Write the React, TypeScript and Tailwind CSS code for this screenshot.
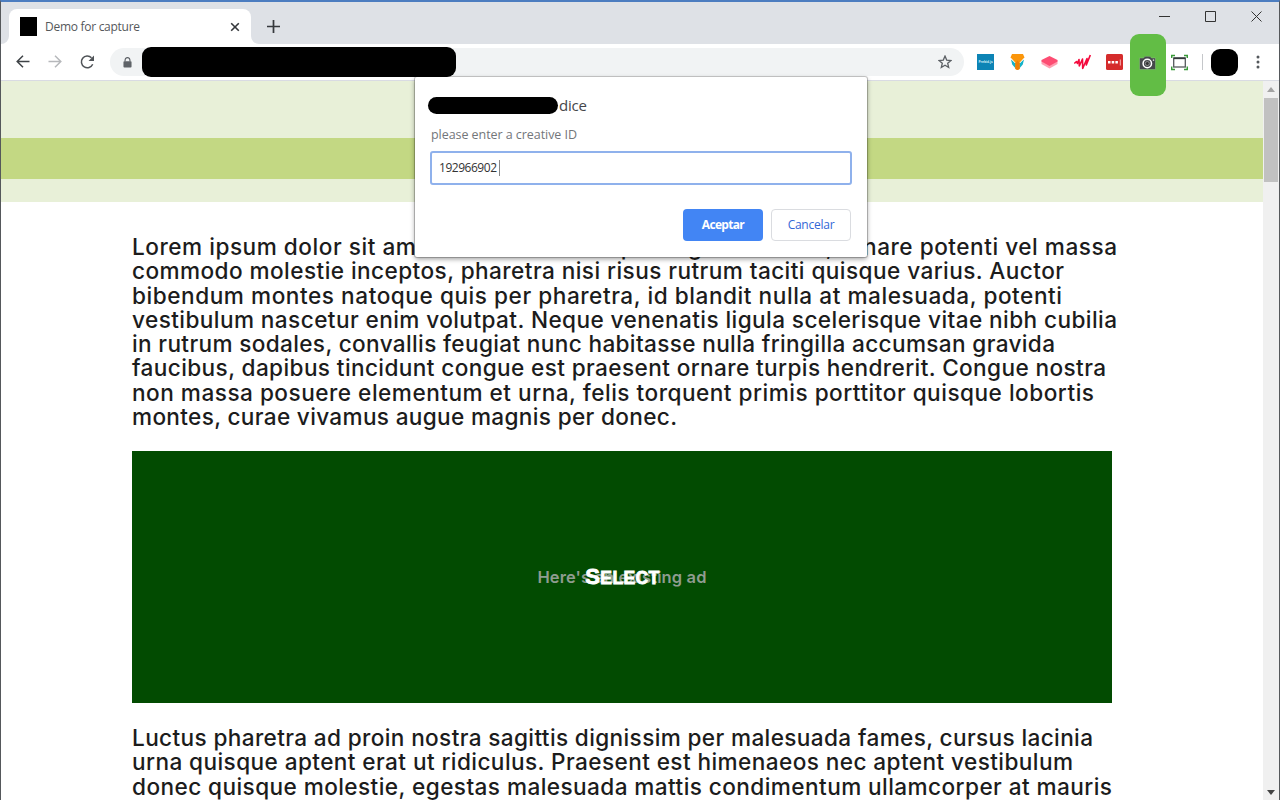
import { useLayoutEffect, useRef } from "react";
import type { ReactNode } from "react";

/** One line of text whose letter spacing is tuned so that it spans `width` pixels. */
function Line({ width, children, className = "" }: { width: number; children: string; className?: string }) {
  const ref = useRef<HTMLSpanElement>(null);
  useLayoutEffect(() => {
    const el = ref.current;
    if (!el) return;
    el.style.letterSpacing = "0px";
    const natural = el.getBoundingClientRect().width;
    el.style.letterSpacing = `${(width - natural) / (children.length - 1)}px`;
  }, [width, children]);
  return (
    <span className={`block ${className}`}>
      <span ref={ref} className="inline-block whitespace-nowrap">{children}</span>
    </span>
  );
}

const first: [string, number][] = [
  ["Lorem ipsum dolor sit amet consectetur adipiscing elit rutrum, ornare potenti vel massa", 985],
  ["commodo molestie inceptos, pharetra nisi risus rutrum taciti quisque varius. Auctor", 932],
  ["bibendum montes natoque quis per pharetra, id blandit nulla at malesuada, potenti", 930],
  ["vestibulum nascetur enim volutpat. Neque venenatis ligula scelerisque vitae nibh cubilia", 985],
  ["in rutrum sodales, convallis feugiat nunc habitasse nulla fringilla accumsan gravida", 923],
  ["faucibus, dapibus tincidunt congue est praesent ornare turpis hendrerit. Congue nostra", 974],
  ["non massa posuere elementum et urna, felis torquent primis porttitor quisque lobortis", 962],
  ["montes, curae vivamus augue magnis per donec.", 545],
];
const second: [string, number][] = [
  ["Luctus pharetra ad proin nostra sagittis dignissim per malesuada fames, cursus lacinia", 961],
  ["urna quisque aptent erat ut ridiculus. Praesent est himenaeos nec aptent vestibulum", 941],
  ["donec quisque molestie, egestas malesuada mattis condimentum ullamcorper at mauris", 980],
];

function Paragraph({ lines }: { lines: [string, number][] }) {
  return (
    <p className="font-['Inter',sans-serif] text-[22.6px] leading-[24.25px] font-medium text-[#1c1c1c]">
      {lines.map(([t, w]) => (
        <Line key={t} width={w}>{t}</Line>
      ))}
    </p>
  );
}

function TitleBar() {
  return (
    <div className="flex h-[43px] shrink-0 items-end bg-[#dee1e6] pl-2">
      <div className="relative flex h-[35px] w-[242px] items-center rounded-t-lg bg-white pr-2.5 pl-[11px]">
        <svg className="absolute bottom-0 -left-2 size-2" viewBox="0 0 8 8"><path d="M8 0v8H0a8 8 0 0 0 8-8" fill="#fff" /></svg>
        <svg className="absolute -right-2 bottom-0 size-2" viewBox="0 0 8 8"><path d="M0 0v8h8a8 8 0 0 1-8-8" fill="#fff" /></svg>
        <div className="h-[19px] w-[17px] bg-black" />
        <Line width={95} className="ml-2 flex-1 text-[12px] leading-4 text-[#55585b]">Demo for capture</Line>
        <svg className="size-3" viewBox="0 0 12 12"><path d="M2.2 2.2l7.6 7.6M9.8 2.2L2.2 9.8" stroke="#34373b" strokeWidth="1.6" /></svg>
      </div>
      <svg className="mb-[11px] ml-4 size-[13px]" viewBox="0 0 12 12"><path d="M6 0v12M0 6h12" stroke="#36393d" strokeWidth="1.6" /></svg>
      <div className="mr-[17px] mb-[22px] ml-auto flex items-center gap-[35px] text-[#333]">
        <svg className="size-[11px]" viewBox="0 0 11 11"><path d="M0 5.5h11" stroke="currentColor" /></svg>
        <svg className="size-[11px]" viewBox="0 0 11 11"><path d="M.5.5h10v10H.5z" fill="none" stroke="currentColor" /></svg>
        <svg className="size-[11px]" viewBox="0 0 11 11"><path d="M.5.5l10 10M10.5.5l-10 10" stroke="currentColor" /></svg>
      </div>
    </div>
  );
}

function Ext({ children }: { children: ReactNode }) {
  return <div className="flex w-[32.4px] items-center justify-center">{children}</div>;
}

function Toolbar() {
  return (
    <div className="flex h-[37px] shrink-0 items-center border-b border-[#d9dbe3] bg-white pl-[14px]">
      <svg className="h-4 w-4" viewBox="0 0 16 16" fill="none" stroke="#3f4347" strokeWidth="1.5"><path d="M14.500 7.500H2.500M8 1.700L2.200 7.500 8 13.300" /></svg>
      <svg className="ml-4 h-4 w-4" viewBox="0 0 16 16" fill="none" stroke="#b6b8bb" strokeWidth="1.5"><path d="M1.500 7.500h12M8 1.700L13.800 7.500 8 13.300" /></svg>
      <svg className="ml-4 h-4 w-4" viewBox="0 0 16 16"><path d="M13.700 10.200A5.900 5.900 0 1 1 12.500 3.700" fill="none" stroke="#505458" strokeWidth="1.500" /><path d="M15 1.500v5.500H9.500z" fill="#505458" /></svg>
      <div className="ml-[15px] flex h-7 w-[854px] items-center rounded-full bg-[#f1f3f4] pr-3 pl-[13px]">
        <svg className="h-[11px] w-[9px]" viewBox="0 0 10 12"><path d="M2.300 5V3.200a2.700 2.700 0 0 1 5.400 0V5" fill="none" stroke="#5f6368" strokeWidth="1.300" /><rect x=".5" y="4.500" width="9" height="7" rx="1" fill="#5f6368" /></svg>
        <div className="ml-[10px] h-[30px] w-[314px] rounded-[9px] bg-black" />
        <svg className="ml-auto h-[14px] w-[14px]" viewBox="0 0 14 14"><path d="M7 1.100l1.700 4 4.300.4-3.300 2.800 1 4.200L7 10.300l-3.700 2.200 1-4.200L1 5.500l4.300-.4z" fill="none" stroke="#5b5f64" strokeWidth="1.300" /></svg>
      </div>
      <div className="ml-[5px] flex h-full items-center">
        <Ext>
          <svg className="size-[17px]" viewBox="0 0 17 17"><rect width="17" height="16" fill="#0d84b5" /><text x="1.500" y="9.300" textLength="14" lengthAdjust="spacingAndGlyphs" fontSize="4" fontWeight="700" fill="#d5edf7">Prebid.js</text></svg>
        </Ext>
        <Ext>
          <svg className="h-4 w-[15px]" viewBox="0 0 15 16"><path d="M1 5.500l1.200 5L6.500 15.500V9.500zM14 5.500l-1.200 5-4.300 5V9.500z" fill="#16b3c9" /><path d="M2 0h11l1.500 3.500L9.700 9v6L7.500 16l-2.200-1V9L.5 3.500z" fill="#fb960b" /><path d="M.7 4.200L5.200 9M14.300 4.200L9.800 9" stroke="#fff" strokeWidth=".9" /><path d="M5.500 9L7.500 6.500l2 2.500v6l-2 1-2-1z" fill="#f07f05" /></svg>
        </Ext>
        <Ext>
          <svg className="h-[13px] w-[17px]" viewBox="0 0 17 13"><path d="M.5 4.500v3.500l8 4.500 8-4.500V4.500z" fill="#ff9fb2" /><path d="M8.500 0l8 4v1.500l-8 4.500-8-4.500V4z" fill="#fd4d73" /></svg>
        </Ext>
        <Ext>
          <svg className="size-[17px]" viewBox="0 0 17 17"><path d="M.3 9.500l2.200-2 .9 2 1.600-4 .3 6.500L8.500 5l.2 9.500L13 4.500l-.7 6.500L16.300 1" fill="none" stroke="#f4093c" strokeWidth="1.600" strokeLinejoin="round" /></svg>
        </Ext>
        <Ext>
          <svg className="size-[17px]" viewBox="0 0 17 17"><rect width="17" height="16" rx="1.500" fill="#d52c2c" /><path d="M2 7h2.500v2.500H2zm3.700 0h2.500v2.500H5.700zm3.700 0h2.500v2.500H9.400z" fill="#fff" /><path d="M14.300 5.500v6" stroke="#fab4b4" /></svg>
        </Ext>
        <div className="relative flex h-full w-[32.4px] items-center justify-center">
          <div className="absolute -top-[10px] -left-[1px] z-10 flex h-[62px] w-9 items-center justify-center rounded-[9px] bg-[#62bd45]">
            <svg className="mt-[-5px] h-[14px] w-[17px]" viewBox="0 0 17 14"><path d="M.5 2h4L6 .3h5L12.500 2h4v11.500H.5z" fill="#45484a" stroke="#8ec780" strokeWidth=".5" /><circle cx="8.300" cy="7.500" r="4.200" fill="#45484a" stroke="#fff" strokeWidth="1.500" /><circle cx="8.300" cy="7.500" r="2" fill="#333" stroke="#bbb" strokeWidth=".6" /><path d="M13.800 3.500h1.400v1.200h-1.400z" fill="#fff" /></svg>
          </div>
        </div>
        <Ext>
          <svg className="h-[17px] w-[17px]" viewBox="0 0 17 17"><path d="M.7 4V1.500H4M13 1.500h3.300V4M16.300 12.500v3H13M4 15.500H.7v-3" fill="none" stroke="#3a9a3a" strokeWidth="1.500" /><rect x="2.700" y="4" width="11.600" height="9" fill="#fff" stroke="#55595c" strokeWidth="1.300" /><path d="M2.700 4.300h11.600" stroke="#33373a" strokeWidth="1.700" /></svg>
        </Ext>
      </div>
      <div className="ml-[6px] h-4 w-px bg-[#c5c7ca]" />
      <div className="ml-[8px] size-[27px] rounded-[9px] bg-black" />
      <svg className="mr-[19px] ml-auto h-[14px] w-1" viewBox="0 0 4 14" fill="#54585c"><circle cx="2" cy="2" r="1.500" /><circle cx="2" cy="7" r="1.500" /><circle cx="2" cy="12" r="1.500" /></svg>
    </div>
  );
}

function PromptDialog() {
  return (
    <div className="absolute top-[75px] left-[414px] z-20 flex h-[180px] w-[452px] flex-col rounded-[2px] bg-white px-4 shadow-[0_0_0_1px_rgba(0,0,0,0.2),0_2px_5px_rgba(0,0,0,0.4)]">
      <div className="mt-5 -ml-[3px] flex h-[17px] items-center">
        <div className="h-[17px] w-[130px] rounded-full bg-black" />
        <Line width={28} className="ml-px text-[15px] leading-[17px] text-[#45464a]">dice</Line>
      </div>
      <Line width={146} className="mt-3 h-[17px] text-[12.5px] leading-[17px] text-[#73767a]">please enter a creative ID</Line>
      <div className="mt-[8px] -ml-px flex h-[34px] w-[422px] items-center rounded-[3px] border-2 border-[#8fb1ec] bg-white pl-[7px]">
        <Line width={58} className="text-[12px] leading-4 text-[#333]">192966902</Line>
        <div className="ml-[2px] h-4 w-px bg-[#888]" />
      </div>
      <div className="mt-6 flex gap-2 self-end">
        <button className="flex h-8 w-20 items-center justify-center rounded bg-[#4285f4] text-white">
          <Line width={43} className="text-[12px] leading-4 font-bold">Aceptar</Line>
        </button>
        <button className="flex h-8 w-20 items-center justify-center rounded border border-[#dadce0] bg-white text-[#3367d6]">
          <Line width={47} className="text-[12px] leading-4">Cancelar</Line>
        </button>
      </div>
    </div>
  );
}

export default function App() {
  return (
    <div className="relative flex h-[800px] w-[1280px] flex-col overflow-hidden border-t-2 border-r border-l border-t-[#4c7dc0] border-r-[#55585b] border-l-[#55585b] bg-white font-['Open_Sans','Noto_Sans',sans-serif]">
      <div className="-mt-px flex flex-col">
        <TitleBar />
        <Toolbar />
      </div>
      <div className="flex min-h-0 flex-1">
        <main className="h-full w-[1262px] overflow-hidden">
          <div className="h-[57px] bg-[#e8f0d8]" />
          <div className="h-[41px] bg-[#c3d883]" />
          <div className="h-[23px] bg-[#e8f0d8]" />
          <div className="pt-[33px] pl-[131px]">
            <Paragraph lines={first} />
            <div className="mt-[22px] mb-[23px] grid h-[252px] w-[980px] place-items-center bg-[#024b01]">
              <Line width={169} className="col-start-1 row-start-1 font-['Inter',sans-serif] text-[16.500px] leading-5 font-semibold text-[#8f9c8f]">Here's an existing ad</Line>
              <span className="z-10 col-start-1 row-start-1 block pl-px font-['Liberation_Sans',sans-serif] text-[17.500px] leading-5 font-bold tracking-[0.4px] text-white uppercase [-webkit-text-stroke:0.9px_white] first-letter:text-[22px]">Select</span>
            </div>
            <Paragraph lines={second} />
          </div>
        </main>
        <div className="flex w-4 flex-col items-center bg-[#f0f0f0]">
          <svg className="my-[6px] h-[5px] w-2 shrink-0" viewBox="0 0 8 5"><path d="M4 0l4 5H0z" fill="#a3a3a3" /></svg>
          <div className="h-[84px] w-[14px] bg-[#c1c1c1]" />
          <svg className="mt-auto mb-[5px] h-[5px] w-2 shrink-0" viewBox="0 0 8 5"><path d="M4 5l4-5H0z" fill="#444" /></svg>
        </div>
      </div>
      <PromptDialog />
    </div>
  );
}
